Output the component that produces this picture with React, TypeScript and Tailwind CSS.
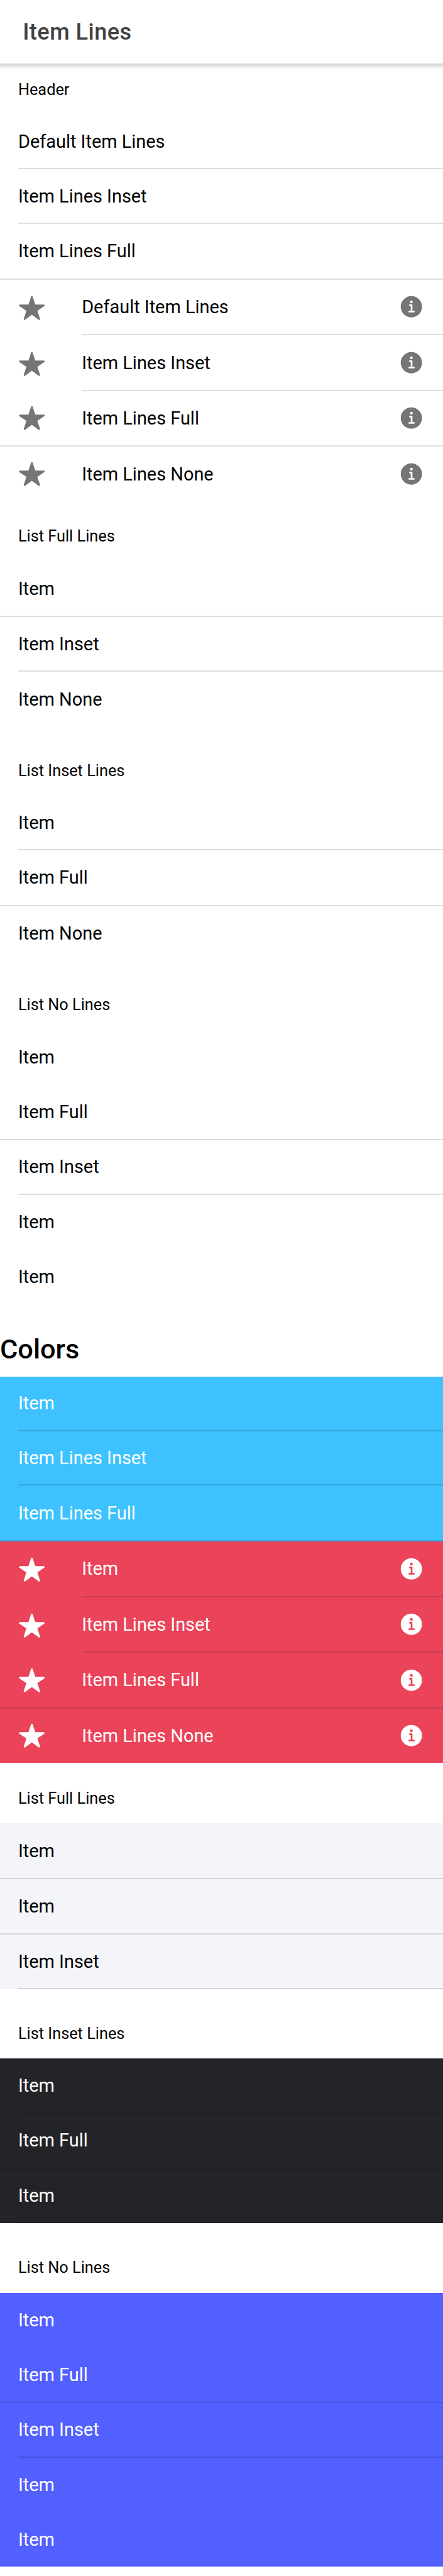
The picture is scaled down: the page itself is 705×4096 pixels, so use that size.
import { IoInformationCircle, IoStar } from "react-icons/io5";

type Lines = "full" | "inset" | "none";

interface Row {
  label: string;
  lines: Lines;
}

interface ItemProps extends Row {
  icons?: boolean;
  iconColor?: string;
}

function Item({ label, lines, icons = false, iconColor = "text-[#757575]" }: ItemProps) {
  const tall = lines === "full" || (icons && lines !== "none");
  const inset = icons ? "ml-[130.15px]" : "ml-[28.92px]";

  return (
    <div className={`flex flex-col ${tall ? "h-[88.577px]" : "h-[86.769px]"}`}>
      <div className="flex min-h-0 flex-1 items-center px-[28.92px]">
        {icons && (
          <IoStar
            className={`mr-[57.85px] size-[43.38px] shrink-0 ${iconColor} ${lines === "inset" ? "mt-[3.4px]" : ""}`}
          />
        )}
        <span className="flex-1 text-[28.923px] leading-[36px]">{label}</span>
        {icons && <IoInformationCircle className={`size-[43.38px] shrink-0 ${iconColor}`} />}
      </div>
      {lines !== "none" && (
        <div className={`h-[2px] shrink-0 bg-black/[0.13] ${lines === "inset" ? inset : ""}`} />
      )}
    </div>
  );
}

function ListHeader({ children }: { children: string }) {
  return (
    <div className="flex h-[81.346px] items-center px-[28.92px] pt-[2px] text-[25.308px] leading-[32px]">
      {children}
    </div>
  );
}

interface ListProps {
  header?: string;
  rows: Row[];
  tone?: string;
  icons?: boolean;
  iconColor?: string;
}

function List({ header, rows, tone = "", icons, iconColor }: ListProps) {
  return (
    <section>
      {header && <ListHeader>{header}</ListHeader>}
      <div className={tone}>
        {rows.map((row, index) => (
          <Item key={index} {...row} icons={icons} iconColor={iconColor} />
        ))}
      </div>
    </section>
  );
}

const iconRows: Row[] = [
  { label: "Item Lines Inset", lines: "inset" },
  { label: "Item Lines Full", lines: "full" },
  { label: "Item Lines None", lines: "none" },
];

const noLineRows: Row[] = [
  { label: "Item", lines: "none" },
  { label: "Item Full", lines: "full" },
  { label: "Item Inset", lines: "inset" },
  { label: "Item", lines: "none" },
  { label: "Item", lines: "none" },
];

export default function App() {
  return (
    <div className="h-[4096px] w-[705px] overflow-hidden bg-white font-['Roboto',sans-serif] text-black">
      <header className="flex h-[101.23px] items-center px-[36.15px]">
        <h1 className="text-[36.15px] leading-[44px] font-medium tracking-[0.0125em] text-[#424242]">
          Item Lines
        </h1>
      </header>
      <div className="-mb-[9px] h-[9px] bg-linear-to-b from-black/[0.18] to-transparent" />

      <main>
        <List
          header="Header"
          rows={[
            { label: "Default Item Lines", lines: "inset" },
            { label: "Item Lines Inset", lines: "inset" },
            { label: "Item Lines Full", lines: "full" },
          ]}
        />
        <List icons rows={[{ label: "Default Item Lines", lines: "inset" }, ...iconRows]} />

        <div className="mt-[14.46px] flex flex-col gap-[28.92px]">
          <List
            header="List Full Lines"
            rows={[
              { label: "Item", lines: "full" },
              { label: "Item Inset", lines: "inset" },
              { label: "Item None", lines: "none" },
            ]}
          />
          <List
            header="List Inset Lines"
            rows={[
              { label: "Item", lines: "inset" },
              { label: "Item Full", lines: "full" },
              { label: "Item None", lines: "none" },
            ]}
          />
          <List header="List No Lines" rows={noLineRows} />
        </div>

        <h2 className="flex h-[115.69px] items-end pb-[17px] text-[43.385px] leading-[52px] font-medium">
          Colors
        </h2>

        <List
          tone="bg-[#3dc2ff] text-white"
          rows={[
            { label: "Item", lines: "inset" },
            { label: "Item Lines Inset", lines: "inset" },
            { label: "Item Lines Full", lines: "full" },
          ]}
        />
        <List
          icons
          iconColor="text-white"
          tone="bg-[#eb445a] text-white"
          rows={[{ label: "Item", lines: "inset" }, ...iconRows]}
        />

        <div className="mt-[14.46px] flex flex-col gap-[28.92px]">
          <List
            header="List Full Lines"
            tone="bg-[#f4f5f8]"
            rows={[
              { label: "Item", lines: "full" },
              { label: "Item", lines: "full" },
              { label: "Item Inset", lines: "inset" },
            ]}
          />
          <List
            header="List Inset Lines"
            tone="bg-[#222428] text-white"
            rows={[
              { label: "Item", lines: "inset" },
              { label: "Item Full", lines: "full" },
              { label: "Item", lines: "inset" },
            ]}
          />
          <List header="List No Lines" tone="bg-[#5260ff] text-white" rows={noLineRows} />
        </div>
      </main>
    </div>
  );
}
